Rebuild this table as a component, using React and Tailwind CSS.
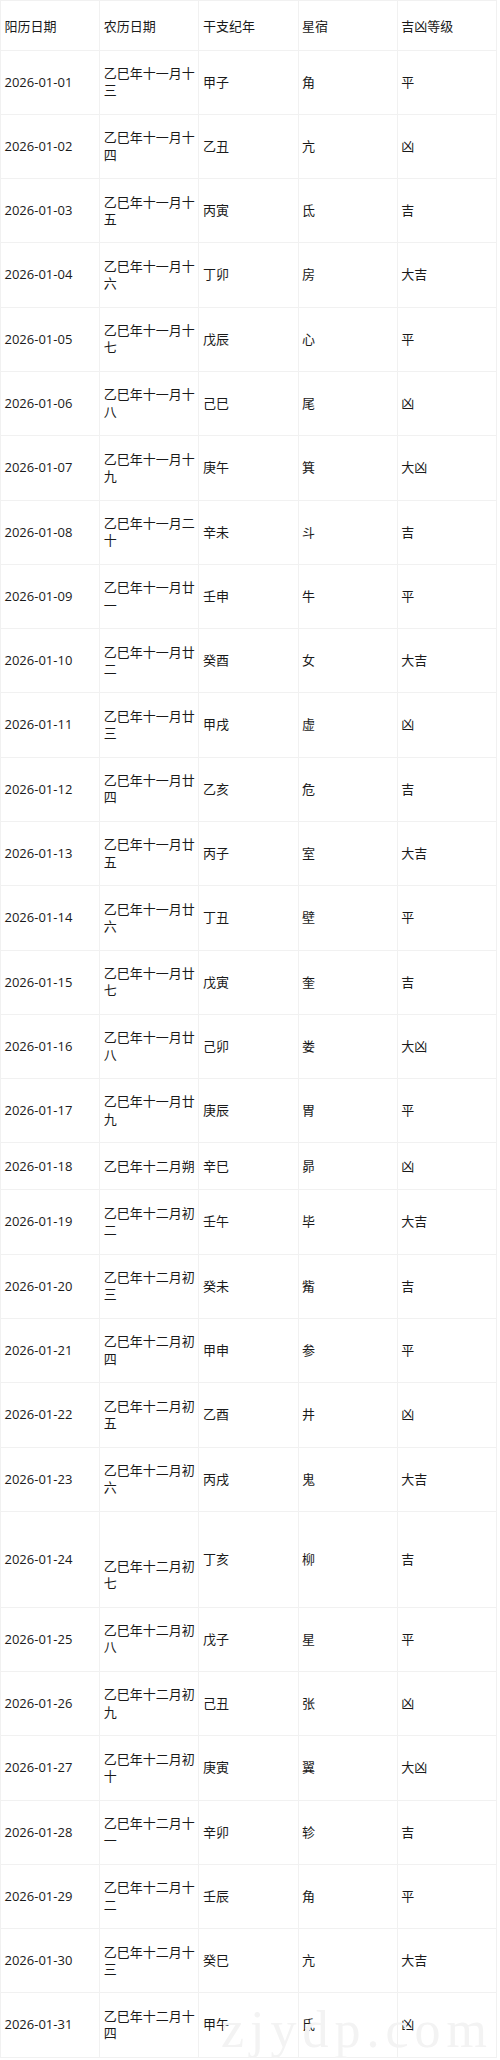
import React from "react";

const rows = [
  ["2026-01-01", "乙巳年十一月十三", "甲子", "角", "平"],
  ["2026-01-02", "乙巳年十一月十四", "乙丑", "亢", "凶"],
  ["2026-01-03", "乙巳年十一月十五", "丙寅", "氐", "吉"],
  ["2026-01-04", "乙巳年十一月十六", "丁卯", "房", "大吉"],
  ["2026-01-05", "乙巳年十一月十七", "戊辰", "心", "平"],
  ["2026-01-06", "乙巳年十一月十八", "己巳", "尾", "凶"],
  ["2026-01-07", "乙巳年十一月十九", "庚午", "箕", "大凶"],
  ["2026-01-08", "乙巳年十一月二十", "辛未", "斗", "吉"],
  ["2026-01-09", "乙巳年十一月廿一", "壬申", "牛", "平"],
  ["2026-01-10", "乙巳年十一月廿二", "癸酉", "女", "大吉"],
  ["2026-01-11", "乙巳年十一月廿三", "甲戌", "虚", "凶"],
  ["2026-01-12", "乙巳年十一月廿四", "乙亥", "危", "吉"],
  ["2026-01-13", "乙巳年十一月廿五", "丙子", "室", "大吉"],
  ["2026-01-14", "乙巳年十一月廿六", "丁丑", "壁", "平"],
  ["2026-01-15", "乙巳年十一月廿七", "戊寅", "奎", "吉"],
  ["2026-01-16", "乙巳年十一月廿八", "己卯", "娄", "大凶"],
  ["2026-01-17", "乙巳年十一月廿九", "庚辰", "胃", "平"],
  ["2026-01-18", "乙巳年十二月朔", "辛巳", "昴", "凶"],
  ["2026-01-19", "乙巳年十二月初二", "壬午", "毕", "大吉"],
  ["2026-01-20", "乙巳年十二月初三", "癸未", "觜", "吉"],
  ["2026-01-21", "乙巳年十二月初四", "甲申", "参", "平"],
  ["2026-01-22", "乙巳年十二月初五", "乙酉", "井", "凶"],
  ["2026-01-23", "乙巳年十二月初六", "丙戌", "鬼", "大吉"],
  ["2026-01-24", "乙巳年十二月初七", "丁亥", "柳", "吉"],
  ["2026-01-25", "乙巳年十二月初八", "戊子", "星", "平"],
  ["2026-01-26", "乙巳年十二月初九", "己丑", "张", "凶"],
  ["2026-01-27", "乙巳年十二月初十", "庚寅", "翼", "大凶"],
  ["2026-01-28", "乙巳年十二月十一", "辛卯", "轸", "吉"],
  ["2026-01-29", "乙巳年十二月十二", "壬辰", "角", "平"],
  ["2026-01-30", "乙巳年十二月十三", "癸巳", "亢", "大吉"],
  ["2026-01-31", "乙巳年十二月十四", "甲午", "氐", "凶"],
];

const headers = ["阳历日期", "农历日期", "干支纪年", "星宿", "吉凶等级"];

const cell =
  "border border-[#f1f1f1] px-[3.5px] py-[14.35px] align-middle text-left font-normal break-all";

export default function App() {
  return (
    <div
      className="relative w-[500px] bg-white text-[#1a1a1a] text-[13px] leading-[17.3px]"
      style={{ fontFamily: '"Open Sans", "Noto Sans CJK SC", sans-serif' }}
    >
      <table className="w-[497px] table-fixed border-collapse">
        <colgroup>
          <col className="w-[20%]" />
          <col className="w-[20%]" />
          <col className="w-[20%]" />
          <col className="w-[20%]" />
          <col className="w-[20%]" />
        </colgroup>
        <thead>
          <tr>
            {headers.map((h) => (
              <th
                key={h}
                className="border border-[#f1f1f1] px-[3.5px] pt-[17px] pb-[14.35px] text-left font-normal align-middle"
              >
                {h}
              </th>
            ))}
          </tr>
        </thead>
        <tbody>
          {rows.map((r) => {
            const special = r[0] === "2026-01-24";
            return (
              <tr key={r[0]}>
                <td className={cell}>{r[0]}</td>
                <td
                  className={
                    special
                      ? "border border-[#f1f1f1] px-[3.5px] pt-[46px] pb-[14.35px] align-middle text-left break-all"
                      : cell
                  }
                >
                  {r[1]}
                </td>
                <td className={cell}>{r[2]}</td>
                <td className={cell}>{r[3]}</td>
                <td className={cell}>{r[4]}</td>
              </tr>
            );
          })}
        </tbody>
      </table>
      <div
        className="pointer-events-none absolute left-[221px] top-[2004px] text-[52px] leading-none tracking-[6px] text-[#f3f3f3] select-none"
        style={{ fontFamily: '"Liberation Serif", serif' }}
      >
        zjydp.com
      </div>
    </div>
  );
}
